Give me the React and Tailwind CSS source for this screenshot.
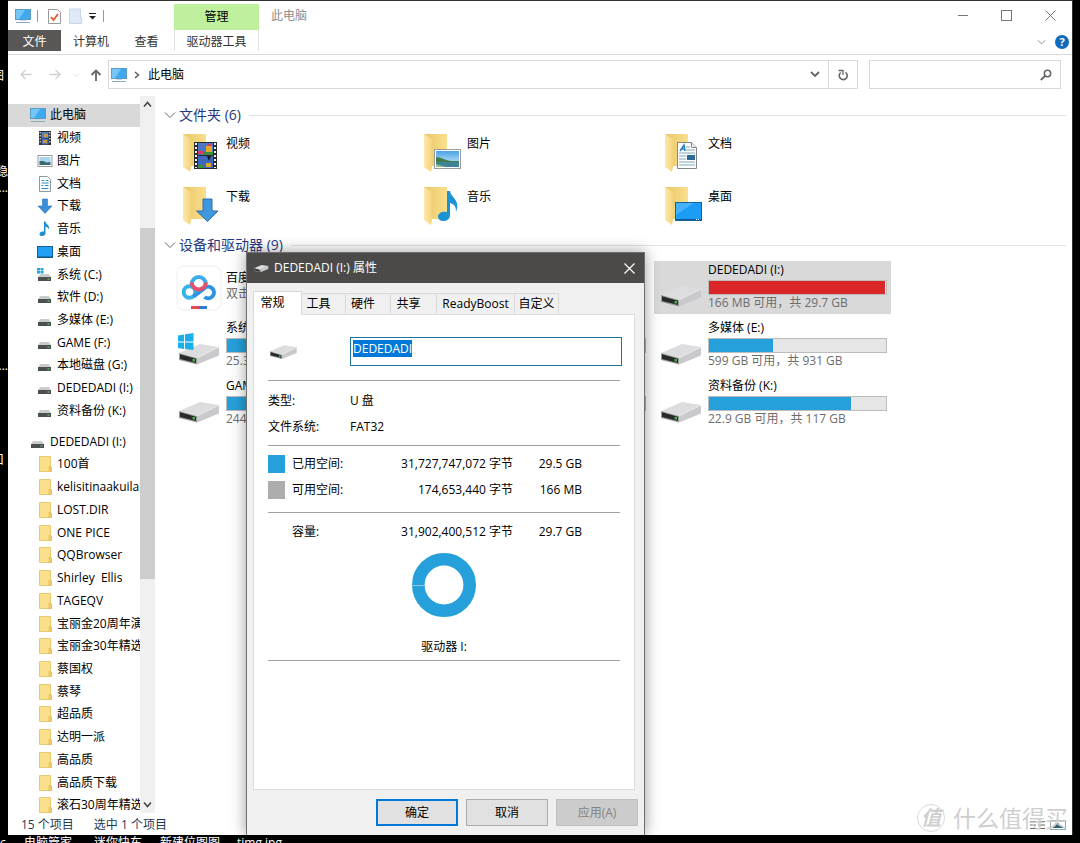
import React, { useEffect, useRef, useState } from "react";

const treeTop = [
  { label: "视频", icon: "video" },
  { label: "图片", icon: "picture" },
  { label: "文档", icon: "document" },
  { label: "下载", icon: "download" },
  { label: "音乐", icon: "music" },
  { label: "桌面", icon: "desktop" },
  { label: "系统 (C:)", icon: "system" },
  { label: "软件 (D:)", icon: "drive" },
  { label: "多媒体 (E:)", icon: "drive" },
  { label: "GAME (F:)", icon: "drive" },
  { label: "本地磁盘 (G:)", icon: "drive" },
  { label: "DEDEDADI (I:)", icon: "drive" },
  { label: "资料备份 (K:)", icon: "drive" },
];

const treeFolders = [
  "100首",
  "kelisitinaakuilal",
  "LOST.DIR",
  "ONE PICE",
  "QQBrowser",
  "Shirley  Ellis",
  "TAGEQV",
  "宝丽金20周年演",
  "宝丽金30年精选",
  "蔡国权",
  "蔡琴",
  "超品质",
  "达明一派",
  "高品质",
  "高品质下载",
  "滚石30周年精选",
];

const folders = [
  { label: "视频", icon: "video" },
  { label: "图片", icon: "picture" },
  { label: "文档", icon: "document" },
  { label: "下载", icon: "download" },
  { label: "音乐", icon: "music" },
  { label: "桌面", icon: "desktop" },
];

const drives = [
  { name: "百度网盘", note: "双击运行", app: true },
  null,
  { name: "DEDEDADI (I:)", used: 99.4, note: "166 MB 可用，共 29.7 GB", full: true, selected: true },
  { name: "系统 (C:)", used: 70, note: "25.3 GB", system: true },
  { name: "软件 (D:)", used: 60, note: "" },
  { name: "多媒体 (E:)", used: 36, note: "599 GB 可用，共 931 GB" },
  { name: "GAME (F:)", used: 60, note: "244 GB" },
  { name: "本地磁盘 (G:)", used: 60, note: "" },
  { name: "资料备份 (K:)", used: 80, note: "22.9 GB 可用，共 117 GB" },
];

const tabs = [
  { label: "常规", width: "w-[49px]" },
  { label: "工具", width: "w-[44px]" },
  { label: "硬件", width: "w-[45px]" },
  { label: "共享", width: "w-[46px]" },
  { label: "ReadyBoost", width: "w-[78px]" },
  { label: "自定义", width: "w-[44px]" },
];

function ComputerIcon() {
  return (
    <svg width="16" height="16" viewBox="0 0 16 16" className="shrink-0">
      <rect x="0.5" y="1.5" width="15" height="10" fill="#3fa9ee" stroke="#5c9cc4" />
      <path d="M1 2h9L4 11H1z" fill="#74c5f8" />
      <path d="M5 12h6v1H5z" fill="#c3d5e0" />
      <path d="M1 14.5h14" stroke="#8aa9ba" />
    </svg>
  );
}

function SmallDrive({ system }) {
  return (
    <svg width="16" height="16" viewBox="0 0 16 16" className="shrink-0">
      {system && (
        <path d="M0 1h3v2.500H0zM3.500 1h3v2.500h-3zM0 4h3v2.500H0zM3.500 4h3v2.500h-3z" fill="#1fa8dc" />
      )}
      <path d="M3 7h9l2 3.500H1z" fill="#c9cccb" />
      <rect x="1" y="10" width="13" height="4" fill="#4a504e" />
      <rect x="10.500" y="11.500" width="2" height="1" fill="#79d08a" />
    </svg>
  );
}

function TreeFolder() {
  return (
    <svg width="16" height="16" viewBox="0 0 16 16" className="shrink-0">
      <path d="M2.500.5h11v10.500h1v4.500h-12z" fill="#fbe08b" stroke="#e8c873" />
      <path d="M12 10.500h2v5h-2z" fill="#f7d36b" stroke="#dfb34e" strokeWidth=".6" />
    </svg>
  );
}

function TreeIcon({ name }) {
  if (name === "computer") return <ComputerIcon />;
  if (name === "folder") return <TreeFolder />;
  if (name === "drive") return <SmallDrive />;
  if (name === "system") return <SmallDrive system />;
  return (
    <svg width="16" height="16" viewBox="0 0 16 16" className="shrink-0">
      {name === "video" && (
        <>
          <rect x="2" y="1" width="12" height="14" fill="#2c2c2c" />
          <rect x="4.500" y="2" width="7" height="6" fill="#5a7fc0" />
          <rect x="4.500" y="8.500" width="7" height="6" fill="#456bb4" />
          <path d="M7 4h4v3H7zM6 10h4v3H6z" fill="#c79a3c" />
          <path d="M3.200 2v12M12.800 2v12" stroke="#e2e2e2" strokeWidth="1.200" strokeDasharray="1.500 1.500" />
        </>
      )}
      {name === "picture" && (
        <>
          <rect x="1" y="2.500" width="14" height="11" fill="#fff" stroke="#9a9a9a" />
          <rect x="2.500" y="4" width="11" height="8" fill="#a8d6f0" />
          <path d="M2.500 8l4 0 3 1.500 4-.5v3h-11z" fill="#3b6a72" />
        </>
      )}
      {name === "document" && (
        <>
          <path d="M2.500 .5h8l3 3v12h-11z" fill="#fff" stroke="#8f9aa2" />
          <path d="M4.500 4.500h3M9 4.500h2.500M4.500 7h7M4.500 9.500h2M8 9.500h3.500M4.500 12.500h7" stroke="#2d8dbd" />
        </>
      )}
      {name === "download" && (
        <path d="M5.500 1h5v7h4.500L8 15.500 1 8h4.500z" fill="#3b8fd9" stroke="#2b74b8" strokeWidth=".6" />
      )}
      {name === "music" && (
        <path d="M7 0.500h1.500c.5 3 4.500 3.500 3.500 8-.8-2-2-2.500-3.500-3v6.500c0 2-1.500 3-3.300 3S2.500 14.500 2.500 13s1.500-2.500 3-2.500H7z" fill="#1d8fd0" />
      )}
      {name === "desktop" && (
        <>
          <rect x="0.500" y="2.500" width="15" height="11" fill="#22a0f5" stroke="#155f95" />
          <path d="M1 13h14" stroke="#0f4c7a" />
        </>
      )}
    </svg>
  );
}

function BigFolder({ name }) {
  return (
    <svg width="40" height="42" viewBox="0 0 40 42" className="shrink-0">
      <defs>
        <linearGradient id="folderBack" x1="0" y1="0" x2="1" y2="0">
          <stop offset="0" stopColor="#e9c767" />
          <stop offset="1" stopColor="#fadf8c" />
        </linearGradient>
        <linearGradient id="folderFlap" x1="0" y1="0" x2="1" y2="0">
          <stop offset="0" stopColor="#fde9a9" />
          <stop offset="1" stopColor="#f4d37d" />
        </linearGradient>
        <linearGradient id="sky" x1="0" y1="0" x2="0" y2="1">
          <stop offset="0" stopColor="#4ba3e6" />
          <stop offset="1" stopColor="#d9effa" />
        </linearGradient>
      </defs>
      <g transform="translate(0 1)">
        <path d="M1 2h23v32H8z" fill="url(#folderBack)" />
        <path d="M1 2l8 5v28l-1 5-7-5z" fill="url(#folderFlap)" />
        {name === "video" && (
          <>
            <rect x="12" y="10" width="23" height="27" fill="#2b2b2b" />
            <rect x="16" y="11" width="15" height="12" fill="#4f76c4" />
            <rect x="16" y="24" width="15" height="12" fill="#3f68bd" />
            <path d="M24 14h6v6h-6zM24 31h5v4h-5z" fill="#e0a92e" />
            <path d="M16 19h6v3h-6zM26 12h3v2h-3z" fill="#d8395a" />
            <path d="M22 20h9v3h-9zM16 33h6v3h-6z" fill="#3a8f3f" />
            <path d="M25 24h4l-2 5z" fill="#1a1a1a" />
            <path d="M14 11v25M33 11v25" stroke="#f2f2f2" strokeWidth="2" strokeDasharray="2 2" />
          </>
        )}
        {name === "picture" && (
          <>
            <rect x="11.500" y="17.500" width="26" height="19" fill="#fff" stroke="#9b9b9b" />
            <rect x="13" y="19" width="23" height="16" fill="url(#sky)" />
            <path d="M13 25c5 0 8 3 15 4h8v2H13z" fill="#3f7d4c" />
            <path d="M13 30h23v5H13z" fill="#3d8496" />
            <path d="M13 32l10 3H13z" fill="#8dbf8c" />
          </>
        )}
        {name === "document" && (
          <>
            <path d="M13.500 10.500h14l5 5v21h-19z" fill="#fff" stroke="#858585" />
            <path d="M27.500 10.500v5h5" fill="#eee" stroke="#858585" />
            <path d="M16 19l4-6 1 6M17.500 17h3.500" stroke="#2480c0" strokeWidth="1.500" fill="none" />
            <path d="M22 15h4M22 18h9M15 21h16M15 24h7M15 27h7M15 30h16M15 33h16" stroke="#7fa3ba" />
            <rect x="23" y="23" width="8" height="5" fill="#2b6c96" />
          </>
        )}
        {name === "download" && (
          <path d="M21 14h9v12h6L25.500 36.500 14.500 26H21z" fill="#3f97e0" stroke="#2f6fa8" />
        )}
        {name === "music" && (
          <path d="M24 6h3c1 7 11 9 6 21 0-6-2-8-6-9v12c0 4-3 6-7 6-3 0-5-2-5-4 0-4 4-6 9-5z" fill="#1c93d2" />
        )}
        {name === "desktop" && (
          <>
            <rect x="11.500" y="17.500" width="26" height="18" fill="#1b9cf5" stroke="#14659d" />
            <path d="M12 30l18-12H12z" fill="#43b2fb" />
            <path d="M12 34.500h25" stroke="#0d5c99" />
            <path d="M32 34.500h4" stroke="#fff" strokeDasharray="1 1" />
          </>
        )}
      </g>
    </svg>
  );
}

function DriveShape() {
  return (
    <>
      <path d="M0 10L21 1l19 3-22 11z" fill="#dddde0" />
      <path d="M18 15L40 4v8.500L18 21.500z" fill="#c9c9cd" />
      <path d="M0 10l18 5v6.500L0 17z" fill="#9a9d9b" />
      <path d="M1 11.300l16 4.500v4.200L1 16z" fill="#262b29" />
      <path d="M18 15l22-11" stroke="#ececee" strokeWidth=".8" fill="none" />
      <rect x="13.500" y="16" width="2.500" height="2.500" fill="#4fae54" />
    </>
  );
}

function BigDrive({ system }) {
  return (
    <svg width="42" height="34" viewBox="0 0 42 34" className="shrink-0">
      <g transform="translate(1 11)">
        <DriveShape />
      </g>
      {system && (
        <path d="M0 3.500l6-1V9.500H0zM7 2.300L15.500 1v8.500H7zM0 10.500h6V17l-6-1zM7 10.500h8.500V18L7 17z" fill="#19b0ea" />
      )}
    </svg>
  );
}

function NetdiskIcon() {
  return (
    <svg width="46" height="46" viewBox="0 0 46 46" className="shrink-0">
      <rect x="1" y="1" width="44" height="44" rx="7" fill="#fff" stroke="#eee" />
      <g fill="none" strokeWidth="4">
        <circle cx="13.500" cy="27" r="5.800" stroke="#35b4ec" />
        <path d="M17.500 31.500L28 23.500a5.800 5.800 0 1 1 .5 8.500" stroke="#2b93e2" />
        <path d="M15.800 19a7 7 0 1 1 14 0" stroke="#3cabea" />
        <path d="M15.800 17.500a7 7 0 0 0 14 0" stroke="#e2536b" />
      </g>
      <rect x="15" y="41" width="8" height="3" fill="#e04b5c" />
      <rect x="23" y="41" width="8" height="3" fill="#2d7dd2" />
    </svg>
  );
}

function Chevron({ className }) {
  return (
    <svg width="12" height="8" viewBox="0 0 12 8" className={className}>
      <path d="M1 1.500l5 5 5-5" fill="none" stroke="currentColor" />
    </svg>
  );
}

function TitleBar() {
  return (
    <header className="shrink-0 border-b border-[#dadbdc] pb-[3px]">
      <div className="flex h-[29px]">
        <div className="flex w-[166px] items-center pl-[7px]">
          <ComputerIcon />
          <span className="ml-[6px] h-3 w-px bg-[#9a9a9a]" />
          <button aria-label="属性" className="ml-[10px]">
            <svg width="13" height="16" viewBox="0 0 13 16">
              <path d="M.5 1.500h9l3 3v11H.5z" fill="#fff" stroke="#999" />
              <path d="M3 9l2.500 3L10 6" fill="none" stroke="#dd5b2a" strokeWidth="1.800" />
            </svg>
          </button>
          <button aria-label="新建文件夹" className="ml-2">
            <svg width="13" height="16" viewBox="0 0 13 16">
              <path d="M.5 1h11v9h1v5.500H.5z" fill="#dfe8f7" stroke="#cbd6e8" />
            </svg>
          </button>
          <button aria-label="自定义快速访问工具栏" className="ml-[6px]">
            <svg width="9" height="8" viewBox="0 0 9 8">
              <path d="M1 1.500h7" stroke="#222" />
              <path d="M1 4h7L4.500 7.500z" fill="#222" />
            </svg>
          </button>
          <span className="ml-[6px] h-3 w-px bg-[#9a9a9a]" />
        </div>
        <div className="mt-[3px] flex w-[85px] items-center justify-center bg-[#bff09d]">管理</div>
        <h1 className="ml-3 flex items-center text-[#8e8e8e]">此电脑</h1>
        <div className="ml-auto flex items-center gap-[33px] pr-4 text-[#777]">
          <button aria-label="最小化">
            <svg width="10" height="11" viewBox="0 0 10 11"><path d="M0 5.500h10" stroke="currentColor" /></svg>
          </button>
          <button aria-label="最大化">
            <svg width="11" height="11" viewBox="0 0 11 11"><rect x=".5" y=".5" width="10" height="10" fill="none" stroke="currentColor" /></svg>
          </button>
          <button aria-label="关闭">
            <svg width="11" height="11" viewBox="0 0 11 11"><path d="M.5.5l10 10M10.500.5l-10 10" stroke="currentColor" /></svg>
          </button>
        </div>
      </div>
      <nav className="flex h-[21px] items-stretch text-[#333]">
        <button className="w-[53px] bg-[#595755] pt-[2px] text-white">文件</button>
        <button className="w-[60px] pt-[2px]">计算机</button>
        <button className="mr-[2px] w-[51px] pt-[2px]">查看</button>
        <button className="w-[85px] border-x border-[#e0e0e0] pt-[2px]">驱动器工具</button>
        <div className="ml-auto flex items-center gap-[9px] pt-[2px] pr-[3px]">
          <button aria-label="展开功能区" className="text-[#777]"><Chevron className="w-[9px]" /></button>
          <button aria-label="帮助" className="flex size-[14px] items-center justify-center rounded-full bg-[#0f6cbd] text-[11px] leading-none font-bold text-white">?</button>
        </div>
      </nav>
    </header>
  );
}

function AddressBar() {
  return (
    <div className="flex h-[41px] shrink-0 items-center pr-[11px] pb-[2px]">
      <div className="flex w-[100px] items-center pl-3 text-[#cfcfcf]">
        <button aria-label="后退">
          <svg width="12" height="11" viewBox="0 0 12 11"><path d="M11.500 5.500H1M5.500 1L1 5.500 5.500 10" fill="none" stroke="currentColor" strokeWidth="1.300" /></svg>
        </button>
        <button aria-label="前进" className="ml-[17px]">
          <svg width="12" height="11" viewBox="0 0 12 11"><path d="M.5 5.500H11M6.500 1L11 5.500 6.500 10" fill="none" stroke="currentColor" strokeWidth="1.300" /></svg>
        </button>
        <button aria-label="最近浏览" className="ml-3"><Chevron className="w-[7px]" /></button>
        <button aria-label="上移" className="ml-[10px] text-[#666]">
          <svg width="12" height="12" viewBox="0 0 12 12"><path d="M6 12V1.500M1.500 6L6 1.500 10.500 6" fill="none" stroke="currentColor" strokeWidth="1.800" /></svg>
        </button>
      </div>
      <div className="flex h-[29px] flex-1 items-center border border-[#d9d9d9] pl-[2px]">
        <ComputerIcon />
        <svg width="6" height="8" viewBox="0 0 6 8" className="ml-[7px]"><path d="M1 1l3.500 3L1 7" fill="none" stroke="#555" strokeWidth="1.400" /></svg>
        <a href="#" className="ml-2 flex-1 text-black">此电脑</a>
        <button aria-label="历史记录" className="mr-2 text-[#666]">
          <svg width="10" height="7" viewBox="0 0 10 7"><path d="M1 1l4 4 4-4" fill="none" stroke="currentColor" strokeWidth="1.800" /></svg>
        </button>
        <button aria-label="刷新" className="flex h-full w-[29px] items-center justify-center border-l border-[#d9d9d9]">
          <svg width="12" height="12" viewBox="0 0 12 12">
            <path d="M8.500 3.300a4 4 0 1 1-4.800.2" fill="none" stroke="#666" strokeWidth="1.600" />
            <path d="M1.500 1.500h4.500v4.500" fill="none" stroke="#666" strokeWidth="1.300" />
          </svg>
        </button>
      </div>
      <label className="ml-[11px] flex h-[29px] w-[192px] items-center border border-[#d9d9d9] pr-2">
        <input type="text" aria-label="搜索" className="min-w-0 flex-1 bg-transparent px-2 outline-none" />
        <svg width="12" height="12" viewBox="0 0 12 12"><circle cx="7.500" cy="4.500" r="3.200" fill="none" stroke="#666" strokeWidth="1.500" /><path d="M5 7L.8 11" stroke="#666" strokeWidth="1.800" /></svg>
      </label>
    </div>
  );
}

function TreeItem({ label, icon, root, selected }) {
  return (
    <li className={selected ? "flex-1 bg-[#d9d9d9]" : "flex-1"}>
      <a
        href="#"
        className={root ? "flex h-full items-center gap-1 pl-[22px] whitespace-pre" : "flex h-full items-center gap-1 pl-[29px] whitespace-pre"}
      >
        <TreeIcon name={icon} />
        {label}
      </a>
    </li>
  );
}

function Sidebar() {
  return (
    <aside className="flex w-[147px] shrink-0">
      <ul className="mt-2 -mb-[2px] flex w-[132px] flex-col overflow-hidden">
        <TreeItem label="此电脑" icon="computer" root selected />
        {treeTop.map((item) => (
          <TreeItem key={item.label} label={item.label} icon={item.icon} />
        ))}
        <li className="h-2 shrink-0" aria-hidden="true" />
        <TreeItem label="DEDEDADI (I:)" icon="drive" root />
        {treeFolders.map((name) => (
          <TreeItem key={name} label={name} icon="folder" />
        ))}
      </ul>
      <div className="mb-[2px] flex w-[15px] flex-col items-center bg-[#f0f0f0] py-[5px] text-[#444]">
        <svg width="9" height="7" viewBox="0 0 9 7"><path d="M1 5.500l3.500-4 3.500 4" fill="none" stroke="currentColor" strokeWidth="1.500" /></svg>
        <div className="flex w-full flex-1 flex-col">
          <div className="grow-[120]" />
          <div className="grow-[350] bg-[#cdcdcd]" />
          <div className="grow-[222]" />
        </div>
        <svg width="9" height="7" viewBox="0 0 9 7"><path d="M1 1.500l3.500 4 3.500-4" fill="none" stroke="currentColor" strokeWidth="1.500" /></svg>
      </div>
    </aside>
  );
}

function SectionHeader({ title }) {
  return (
    <div className="mb-2 flex h-4 items-center pr-[6px] pl-[9px]">
      <Chevron className="text-[#666]" />
      <h2 className="ml-[3px] text-[14px] leading-4 text-[#24397f]">{title}</h2>
      <div className="ml-2 h-px flex-1 bg-[#e2e2e2]" />
    </div>
  );
}

function DriveItem({ drive }) {
  if (!drive) return <div className="h-[53px]" />;
  if (drive.app) {
    return (
      <div className="flex h-[53px] items-center pl-1">
        <NetdiskIcon />
        <div className="ml-1 pb-1 whitespace-nowrap">
          <p className="leading-4">{drive.name}</p>
          <p className="leading-4 text-[#6d6d6d]">{drive.note}</p>
        </div>
      </div>
    );
  }
  return (
    <div className={drive.selected ? "flex h-[53px] bg-[#d9d9d9] pt-[1px] pl-[6px]" : "flex h-[53px] pt-[1px] pl-[6px]"}>
      <div className="mt-3">
        <BigDrive system={drive.system} />
      </div>
      <div className="ml-[6px] w-[179px]">
        <p className="leading-4">{drive.name}</p>
        <div className="mt-[2px] h-[15px] border border-[#bcbcbc] bg-[#e6e6e6]">
          <div
            className={drive.full ? "h-full bg-[#da2626]" : "h-full bg-[#26a0da]"}
            style={{ width: `${drive.used}%` }}
          />
        </div>
        <p className="leading-4 text-[#6d6d6d]">{drive.note}</p>
      </div>
    </div>
  );
}

function Content() {
  return (
    <main className="min-w-0 flex-1 pt-[11px]">
      <SectionHeader title="文件夹 (6)" />
      <div className="grid grid-cols-[repeat(3,237px)] gap-x-1 pl-[17px]">
        {folders.map((folder) => (
          <a key={folder.label} href="#" className="flex h-[53px] pl-[10px]">
            <BigFolder name={folder.icon} />
            <span className="ml-1 pt-[5px] leading-4">{folder.label}</span>
          </a>
        ))}
      </div>
      <SectionHeader title="设备和驱动器 (9)" />
      <div className="grid grid-cols-[repeat(3,237px)] gap-x-1 gap-y-[5px] pl-[17px]">
        {drives.map((drive, i) => (
          <DriveItem key={i} drive={drive} />
        ))}
      </div>
    </main>
  );
}

function SizeRow({ color, label, bytes, size }) {
  return (
    <div className="flex h-[26px] items-center">
      <span className={`h-[18px] w-[17px] ${color}`} />
      <dt className="ml-[7px] w-[70px]">{label}</dt>
      <dd className="w-[151px] text-right">{bytes} 字节</dd>
      <dd className="w-[69px] text-right">{size}</dd>
    </div>
  );
}

function PropertiesDialog() {
  const [active, setActive] = useState("常规");
  const nameRef = useRef(null);

  useEffect(() => {
    nameRef.current.focus();
    nameRef.current.select();
  }, []);

  return (
    <section
      role="dialog"
      aria-label="DEDEDADI (I:) 属性"
      className="absolute top-[251px] bottom-0 left-[238px] flex w-[399px] flex-col border border-b-0 border-[#6f6f6f] bg-[#f0f0f0] shadow-[0_0_14px_rgba(0,0,0,0.4)]"
    >
      <div className="flex h-[30px] shrink-0 items-center bg-[#4c4a48] pr-[9px] pl-[7px] text-white">
        <svg width="15" height="9" viewBox="0 0 42 22"><DriveShape /></svg>
        <h2 className="ml-[5px] flex-1">DEDEDADI (I:) 属性</h2>
        <button aria-label="关闭">
          <svg width="11" height="11" viewBox="0 0 11 11"><path d="M.5.5l10 10M10.500.5l-10 10" stroke="currentColor" strokeWidth="1.200" /></svg>
        </button>
      </div>
      <div role="tablist" className="mt-2 flex h-[23px] shrink-0 items-end pl-[6px]">
        {tabs.map((tab) => (
          <button
            key={tab.label}
            role="tab"
            aria-selected={active === tab.label}
            onClick={() => setActive(tab.label)}
            className={
              active === tab.label
                ? `relative -mb-px h-6 border border-b-0 border-[#d9d9d9] bg-white pr-[10px] pb-[2px] ${tab.width}`
                : `h-[21px] border border-b-0 border-l-0 border-[#d9d9d9] ${tab.label.length > 2 ? "" : "pr-[10px]"} ${tab.width}`
            }
          >
            {tab.label}
          </button>
        ))}
      </div>
      <div className="mr-[9px] ml-[6px] flex-1 border border-[#dcdcdc] bg-white px-[14px]">
        <div className="flex items-center pt-[22px] pb-[14px]">
          <div className="w-[82px] shrink-0 pl-[2px]">
            <svg width="28" height="16" viewBox="0 0 42 22"><DriveShape /></svg>
          </div>
          <input
            ref={nameRef}
            type="text"
            aria-label="卷标"
            defaultValue="DEDEDADI"
            className="h-[29px] w-[272px] shrink-0 border border-[#1f7399] bg-white px-[2px] pb-[6px] leading-4 caret-transparent outline-none selection:bg-[#0078d7] selection:text-white"
          />
        </div>
        <dl className="border-t border-[#a0a0a0] pt-[7px] pb-[5px]">
          <div className="flex h-[26px] items-center"><dt className="w-[82px]">类型:</dt><dd>U 盘</dd></div>
          <div className="flex h-[26px] items-center"><dt className="w-[82px]">文件系统:</dt><dd>FAT32</dd></div>
        </dl>
        <dl className="border-t border-[#a0a0a0] pt-[5px] pb-[9px]">
          <SizeRow color="bg-[#26a0da]" label="已用空间:" bytes="31,727,747,072" size="29.5 GB" />
          <SizeRow color="bg-[#adadad]" label="可用空间:" bytes="174,653,440" size="166 MB" />
        </dl>
        <dl className="border-t border-[#a0a0a0] pt-[6px]">
          <SizeRow color="bg-transparent" label="容量:" bytes="31,902,400,512" size="29.7 GB" />
        </dl>
        <div className="flex flex-col items-center border-b border-[#a0a0a0] pt-2 pb-[5px]">
          <svg width="64" height="64" viewBox="0 0 64 64">
            <circle cx="32" cy="32" r="25.700" fill="none" stroke="#26a0da" strokeWidth="12.600" />
            <path d="M0 32.500h13" stroke="#8fc9e6" />
          </svg>
          <p className="mt-[22px] leading-4">驱动器 I:</p>
        </div>
      </div>
      <div className="flex shrink-0 justify-end gap-2 py-[9px] pr-[6px]">
        <button className="h-[27px] w-[82px] border-2 border-[#0078d7] bg-[#e1e1e1]">确定</button>
        <button className="h-[27px] w-[82px] border border-[#adadad] bg-[#e1e1e1]">取消</button>
        <button disabled className="h-[27px] w-[82px] border border-[#bfbfbf] bg-[#cccccc] text-[#838383]">应用(A)</button>
      </div>
    </section>
  );
}

function Watermark() {
  return (
    <div className="pointer-events-none absolute right-1 bottom-[3px] flex items-center gap-2 text-[#cfcfcf]">
      <span className="flex size-7 items-center justify-center rounded-full border border-[#d8d8d8] text-[20px] leading-none font-bold italic">值</span>
      <span className="text-[23px] leading-7">什么值得买</span>
    </div>
  );
}

export default function App() {
  return (
    <div className="flex h-screen flex-col overflow-hidden bg-black font-['Open_Sans','Noto_Sans_CJK_SC',sans-serif] text-[12px] leading-4 text-black">
      <div className="flex min-h-0 flex-1">
        {/* desktop labels peeking out beside the window */}
        <div className="relative w-2 shrink-0 overflow-hidden text-white">
          <span className="absolute top-[68px] right-1">图</span>
          <span className="absolute top-[164px] right-0">稳</span>
          <span className="absolute top-[180px] right-0">...</span>
          <span className="absolute top-[358px] right-0">...</span>
          <span className="absolute top-[452px] right-1">口</span>
        </div>
        <div className="relative flex min-w-0 flex-1 flex-col overflow-hidden border-t border-r border-[#333] bg-white">
          <TitleBar />
          <AddressBar />
          <div className="flex min-h-0 flex-1">
            <Sidebar />
            <Content />
          </div>
          <footer className="flex h-5 shrink-0 items-center gap-5 pl-[13px] text-[#1f3a56]">
            <span>15 个项目</span>
            <span>选中 1 个项目</span>
            <div className="ml-auto flex gap-1 pr-[6px]">
              <button aria-label="详细信息">
                <svg width="16" height="10" viewBox="0 0 16 10"><path d="M0 1.500h6M8 1.500h7M0 5h6M8 5h7M0 8.500h6M8 8.500h7" stroke="#666" /></svg>
              </button>
              <button aria-label="大图标">
                <svg width="16" height="10" viewBox="0 0 16 10"><rect x=".5" y=".5" width="15" height="9" fill="#fff" stroke="#8aa" /><path d="M2 8l6-5 6 5z" fill="#2e6076" /></svg>
              </button>
            </div>
          </footer>
          <PropertiesDialog />
          <Watermark />
        </div>
        <div className="w-[7px] shrink-0" />
      </div>
      <div className="flex h-2 shrink-0 items-start overflow-hidden whitespace-nowrap text-white">
        <span className="w-6">c</span>
        <span className="w-[70px]">电脑管家</span>
        <span className="w-[66px]">迷你快车</span>
        <span className="w-[77px]">新建位图图</span>
        <span>timg.jpg</span>
      </div>
    </div>
  );
}
